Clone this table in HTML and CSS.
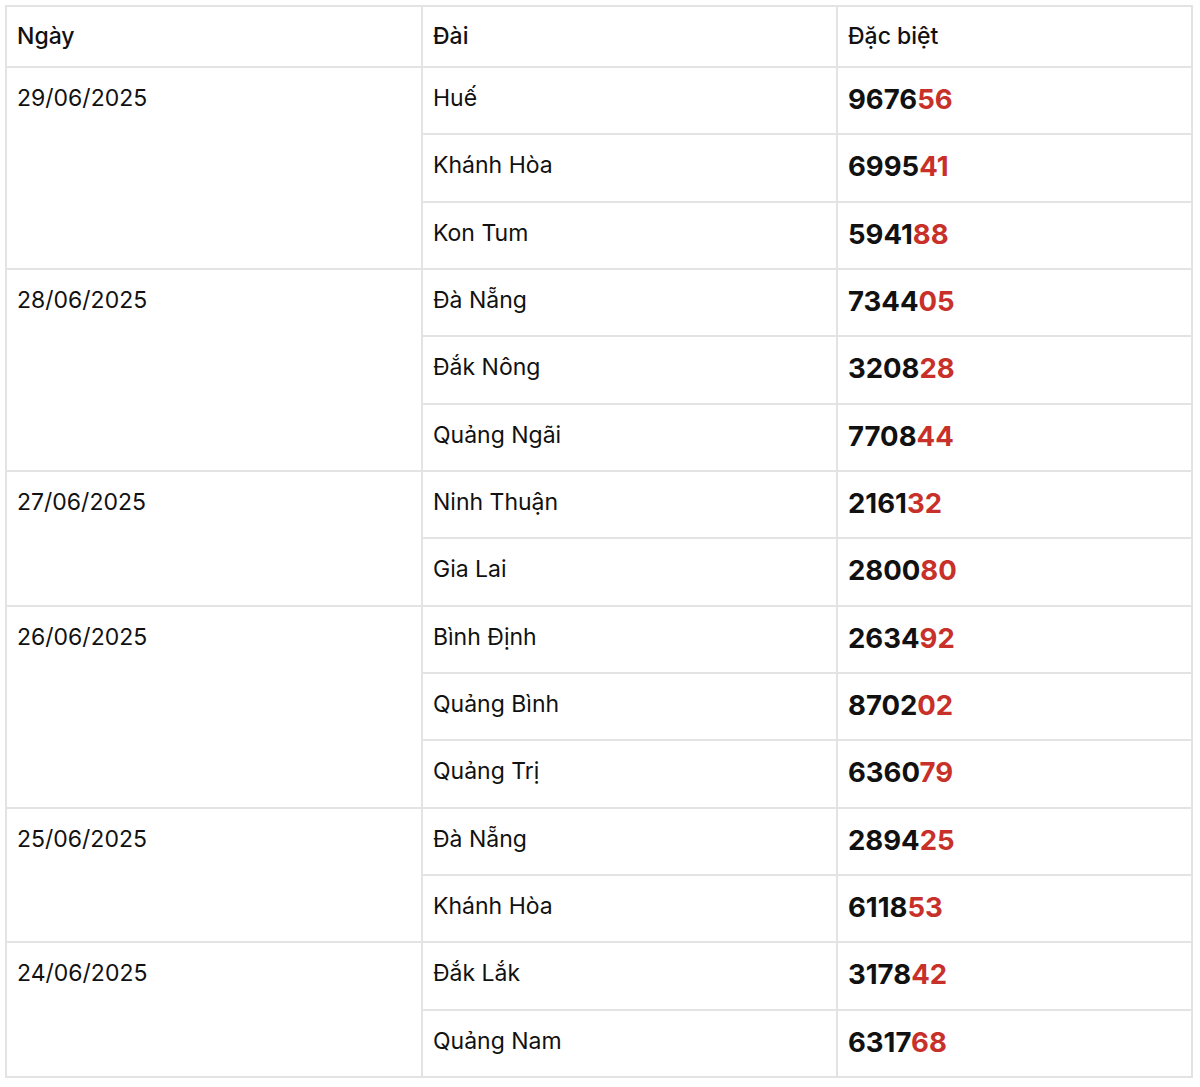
FILE: index.html
```html
<!DOCTYPE html>
<html lang="vi">
<head>
<meta charset="utf-8">
<title>Kết quả</title>
<link rel="stylesheet" href="styles.css">
</head>
<body>
<table class="results">
  <colgroup>
    <col class="c-date">
    <col class="c-station">
    <col class="c-prize">
  </colgroup>
  <thead>
    <tr><th>Ngày</th><th>Đài</th><th>Đặc biệt</th></tr>
  </thead>
  <tbody>
    <tr><td rowspan="3">29/06/2025</td><td>Huế</td><td class="num">9676<span class="hl">56</span></td></tr>
    <tr><td>Khánh Hòa</td><td class="num">6995<span class="hl">41</span></td></tr>
    <tr><td>Kon Tum</td><td class="num">5941<span class="hl">88</span></td></tr>
    <tr><td rowspan="3">28/06/2025</td><td>Đà Nẵng</td><td class="num">7344<span class="hl">05</span></td></tr>
    <tr><td>Đắk Nông</td><td class="num">3208<span class="hl">28</span></td></tr>
    <tr><td>Quảng Ngãi</td><td class="num">7708<span class="hl">44</span></td></tr>
    <tr><td rowspan="2">27/06/2025</td><td>Ninh Thuận</td><td class="num">2161<span class="hl">32</span></td></tr>
    <tr><td>Gia Lai</td><td class="num">2800<span class="hl">80</span></td></tr>
    <tr><td rowspan="3">26/06/2025</td><td>Bình Định</td><td class="num">2634<span class="hl">92</span></td></tr>
    <tr><td>Quảng Bình</td><td class="num">8702<span class="hl">02</span></td></tr>
    <tr><td>Quảng Trị</td><td class="num">6360<span class="hl">79</span></td></tr>
    <tr><td rowspan="2">25/06/2025</td><td>Đà Nẵng</td><td class="num">2894<span class="hl">25</span></td></tr>
    <tr><td>Khánh Hòa</td><td class="num">6118<span class="hl">53</span></td></tr>
    <tr><td rowspan="2">24/06/2025</td><td>Đắk Lắk</td><td class="num">3178<span class="hl">42</span></td></tr>
    <tr><td>Quảng Nam</td><td class="num">6317<span class="hl">68</span></td></tr>
  </tbody>
</table>
</body>
</html>
```
FILE: styles.css
```css
html, body {
  margin: 0;
  padding: 0;
  background: #ffffff;
}
body {
  padding: 5px;
  font-family: Inter, "Noto Sans", "Liberation Sans", sans-serif;
  color: #111111;
}
.results {
  width: 1186px;
  table-layout: fixed;
  border-collapse: collapse;
  font-size: 23px;
  line-height: 33px;
}
.c-date { width: 416px; }
.c-station { width: 415px; }
.c-prize { width: 355px; }
.results th,
.results td {
  border: 2px solid #e3e3e3;
  padding: 14px 10px 8px 10px;
  text-align: left;
  vertical-align: top;
}
.results th {
  font-weight: 500;
  padding-top: 13px;
  padding-bottom: 13px;
}
.results tbody tr {
  height: 67.33px;
}
.results td {
  font-weight: 400;
}
.results td.num {
  font-size: 27.5px;
  font-weight: 700;
  padding-top: 15px;
  padding-bottom: 8px;
}
.hl {
  color: #c8302a;
}
```
